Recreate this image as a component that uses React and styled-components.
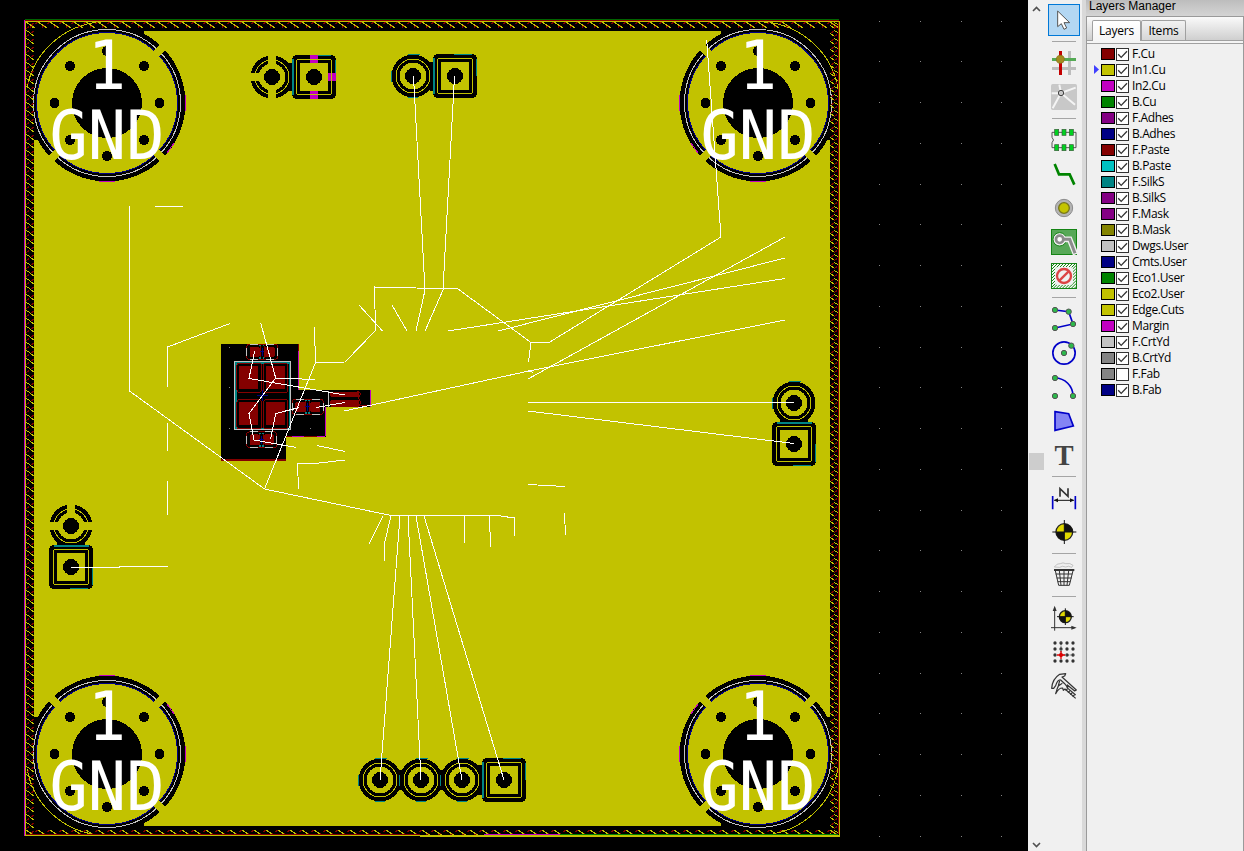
import React from 'react';
import styled, { createGlobalStyle } from 'styled-components';

const GlobalStyle = createGlobalStyle`
  html, body { margin: 0; padding: 0; overflow: hidden; background: #f0f0f0; }
  * { box-sizing: border-box; }
`;

const COPPER = '#c2c200';
const TEAL = '#008484';
const MAGENTA = '#c200c2';
const RED = '#840000';

const Frame = styled.div`
  display: flex;
  width: 1244px;
  height: 851px;
  background: #f0f0f0;
  overflow: hidden;
`;
const Canvas = styled.svg`
  flex: none;
  display: block;
  width: 1028px;
  height: 851px;
  background: #000;
`;
const Scrollbar = styled.div`
  flex: none;
  width: 17px;
  display: flex;
  flex-direction: column;
  align-items: center;
  justify-content: space-between;
  padding: 6px 1px 3px 0;
  background: #f0f0f0;
`;
const Chevron = styled.svg`
  width: 9px;
  height: 6px;
  display: block;
`;
const Thumb = styled.div`
  width: 15px;
  height: 17px;
  margin-top: 68px;
  background: #cdcdcd;
`;
const Toolbar = styled.div`
  flex: none;
  width: 37px;
  padding-top: 3px;
  display: flex;
  flex-direction: column;
  align-items: center;
`;
const ToolButton = styled.div`
  flex: none;
  width: 32px;
  height: 32px;
  margin: 1px 0;
  display: flex;
  align-items: center;
  justify-content: center;
  background: ${(p) => (p.$active ? '#b3d7f3' : 'transparent')};
  border: 1px solid ${(p) => (p.$active ? '#0078d7' : 'transparent')};
`;
const ToolIcon = styled.svg`
  flex: none;
  width: 30px;
  height: 30px;
  display: block;
`;
const ToolSeparator = styled.div`
  flex: none;
  width: 24px;
  height: 1px;
  margin: 4px 0;
  background: #a5a5a5;
`;
const Panel = styled.div`
  flex: 1;
  display: flex;
  flex-direction: column;
  font-family: 'Open Sans', 'Noto Sans', sans-serif;
  border-left: 4px solid #d9d9d9;
`;
const PanelTitle = styled.div`
  height: 16px;
  padding-left: 3px;
  font: 12px/13px 'Liberation Sans', Arial, sans-serif;
  color: #000;
  background: linear-gradient(#bdbdbd, #d4d4d4);
`;
const Notebook = styled.div`
  flex: 1;
  display: flex;
  flex-direction: column;
  border: 1px solid #9a9a9a;
  border-bottom: 0;
`;
const TabBar = styled.div`
  height: 24px;
  padding: 3px 0 0 5px;
  display: flex;
  background: linear-gradient(#fafafa, #cfcfcf);
  border-bottom: 1px solid #a0a0a0;
`;
const Tab = styled.div`
  height: ${(p) => (p.$active ? 21 : 20)}px;
  width: ${(p) => (p.$active ? 49 : 45)}px;
  padding-bottom: ${(p) => (p.$active ? 2 : 0)}px;
  display: flex;
  align-items: center;
  justify-content: center;
  font-size: 12px;
  letter-spacing: -0.2px;
  color: #000;
  border: 1px solid #a0a0a0;
  border-bottom: 0;
  border-radius: 2px 2px 0 0;
  background: ${(p) => (p.$active ? 'linear-gradient(#fff, #f4f4f4)' : 'linear-gradient(#f2f2f2, #d6d6d6)')};
`;
const TabEdge = styled.div`
  height: 3px;
  background: #f4f4f4;
  border-bottom: 1px solid #a0a0a0;
`;
const LayerList = styled.div`
  padding-top: 2px;
  display: flex;
  flex-direction: column;
`;
const LayerRow = styled.div`
  height: 16px;
  display: flex;
  align-items: center;
`;
const ActiveMark = styled.svg`
  width: 14px;
  height: 9px;
  margin-top: -2px;
  visibility: ${(p) => (p.$on ? 'visible' : 'hidden')};
`;
const Swatch = styled.div`
  width: 14px;
  height: 12px;
  margin-right: 1px;
  border: 1px solid #000;
  background: ${(p) => p.$color};
`;
const CheckBox = styled.svg`
  width: 13px;
  height: 13px;
  background: #fff;
  border: 1px solid #333;
`;
const LayerName = styled.span`
  margin-left: 3px;
  font-size: 12px;
  line-height: 16px;
  letter-spacing: -0.38px;
  color: #000;
`;

/* ---------- board drawing ---------- */

function MountingHole({ x, y, flipX = 1, flipY = 1 }) {
  const spokes = [[1, -1], [1, 1], [-1, 1]];
  const drills = [[-37, -37], [37, -37], [-52.5, 0], [52.5, 0], [-37, 37], [37, 37], [0, 53], [0, -52]];
  return (
    <g transform={`translate(${x} ${y})`}>
      <g transform={`scale(${flipX} ${flipY})`}>
        <path d="M-73 -72H37V-60L-60 37H-73Z" fill="#000" />
        <path d="M-80 -15A81 81 0 0 1 5 -81" fill="none" stroke={COPPER} />
        <circle r="78.5" fill="#000" />
        <path d="M78.5 -8V8M-8 78.5H8M67 40L60 50" fill="none" stroke={MAGENTA} />
        <circle r="70.5" fill={COPPER} stroke="#000084" />
        <circle r="73.5" fill="none" stroke="#c2c2c2" />
        {spokes.map(([sx, sy]) => (
          <line key={`${sx}${sy}`} x1={sx * 48} y1={sy * 48} x2={sx * 58} y2={sy * 58} stroke={COPPER} strokeWidth="8" />
        ))}
      </g>
      <circle r="35" fill="#000" />
      {drills.map(([dx, dy], i) => <circle key={i} cx={dx} cy={dy} r="5" fill="#000" />)}
    </g>
  );
}

function HoleLabel({ x, y }) {
  return (
    <g
      transform={`translate(${x} ${y}) scale(.95 1)`}
      fill="#fff"
      fontFamily="'DejaVu Sans Mono', monospace"
      fontSize="67"
      textAnchor="middle"
      shapeRendering="auto"
    >
      <text x="0" y="-14">1</text>
      <text x="0" y="56">GND</text>
    </g>
  );
}

function RoundPad({ x, y, gaps }) {
  return (
    <g transform={`translate(${x} ${y})`}>
      <circle r="21.5" fill="#000" />
      {!gaps && <path d="M-5 -21.5H7M-5 21.5H5M-21.5 -5V6" stroke={TEAL} fill="none" />}
      <circle r="17" fill="none" stroke={COPPER} />
      <circle r="13.5" fill={COPPER} />
      {(gaps || []).map(([gx, gy], i) => (
        <line key={i} x1={gx * 12} y1={gy * 12} x2={gx * 23} y2={gy * 23} stroke={COPPER} strokeWidth="8" />
      ))}
      <circle r="8" fill="#000" />
    </g>
  );
}

function SquarePad({ x, y, side = 'left', spokes }) {
  return (
    <g transform={`translate(${x} ${y})`}>
      <rect x="-22" y="-22" width="44" height="44" rx="5" fill="#000" />
      {side === 'left'
        ? <path d="M-21 -18V18M-1 -21.5H17M21.5 -17V0" stroke={TEAL} strokeWidth="1.6" fill="none" />
        : <path d="M-17 -21H18M21.5 0V18M-1 21.5H17" stroke={TEAL} strokeWidth="1.6" fill="none" />}
      {spokes && <path d="M0 -22V-13M0 22V13M13 0H22" stroke={MAGENTA} strokeWidth="8" />}
      <rect x="-17.5" y="-17.5" width="35" height="35" rx="2" fill="none" stroke={COPPER} />
      <rect x="-14" y="-14" width="28" height="28" fill={COPPER} />
      <circle r="8" fill="#000" />
    </g>
  );
}

const RATSNEST = [
  '129.5,206 129.5,391 264.5,489 391,515.5 497,515.5 514.5,518 514.5,536',
  '155,206.5 183,206.5', '230,323.5 167.5,347 167.5,387', '167.5,423 167.5,451', '167.5,481 167.5,515',
  '71,567.5 168,566.5',
  '260.7,323 275.7,378 315,379.5', '275.7,378 249,413.5 254,440 296.5,447.5',
  '254.5,351.5 249,378.5 345,395', '270.5,439.5 275.7,413.5 299.5,407.5', '316,407.5 345,402.5',
  '314.5,327 315.5,362.5 345,362 375.5,330.5 374.5,287 458,289 531,342.5 549,342.5 721,237 706.7,40',
  '315.5,362.5 264.5,489', '359,305 382.5,331', '392,305 407,331',
  '344,411 529,371 785,320', '317,445.5 345,451.5', '297.5,463.5 314.5,463.5 345,460', '297.5,463.5 298.5,489',
  '413.5,76 425,290 416,331', '454.5,76 443,290 425,331', '531,342.5 528.5,362',
  '785,237 528,379', '785,258 498,331', '785,278.5 448,331', '528,370.5 533,372.5',
  '528,402.5 794,402.5', '528,411 794,443.5', '528,484.5 565,486.5', '564.5,513 565.5,535',
  '383,516 369,544', '391,516 384.5,543 384.5,561', '400,516 380,780', '408,516 421,780', '416,516 462,780', '424,516 504,780',
  '464.5,516 464.5,543', '489.5,516 490.5,547',
];

/* Component area, in units of a third of a pixel. */
function ComponentArea() {
  const smallPads = [[109, 102, 95, 47], [109, 365, 93, 48], [246, 267, 95, 47]];
  return (
    <g transform="translate(210 310) scale(.33333)">
      <path d="M33 102H266V240H482V291H347V380H227V452H33Z" fill="#000" />
      <path d="M265 123V240M481 240V291M346 291V379H227" fill="none" stroke={MAGENTA} strokeWidth="3" />
      <path d="M265 102V123M33 450H227" fill="none" stroke={RED} strokeWidth="4" />
      <path d="M227 380H246M282 380H320M445 286H475" fill="none" stroke={RED} strokeWidth="3" />
      <rect x="77" y="158" width="162" height="198" fill="none" stroke={TEAL} strokeWidth="6" />
      {[[87, 168], [167, 168], [87, 277], [167, 277]].map(([x, y]) => (
        <g key={`${x}-${y}`}>
          <rect x={x - 6} y={y - 8} width="73" height="87" rx="6" fill="#000" stroke={RED} strokeWidth="3" />
          <rect x={x} y={y} width="58" height="69" fill={RED} />
        </g>
      ))}
      <rect x="73" y="154" width="169" height="204" fill="none" stroke="#c2c2c2" strokeWidth="3" />
      <path d="M142 257H174M158 240V273" stroke="#000084" strokeWidth="3" />
      {smallPads.map(([x, y, w, h], i) => (
        <g key={i}>
          <rect x={x + 1} y={y + 1} width={w - 2} height={h - 2} rx="7" fill="#000" stroke={RED} strokeWidth="3" />
          <path
            d={`M${x + 12} ${y + 1}h24M${x + w - 36} ${y + 1}h24M${x + 12} ${y + h - 1}h24M${x + w - 36} ${y + h - 1}h24M${x + 1} ${y + 12}v24M${x + w - 1} ${y + 12}v24`}
            fill="none"
            stroke="#c2c2c2"
            strokeWidth="3"
          />
          <rect x={x + 10} y={y + 8} width="30" height="32" rx="6" fill={RED} />
          <rect x={x + w - 40} y={y + 8} width="30" height="32" rx="6" fill={RED} />
          <path d={`M${x + w / 2 - 6} ${y + 6}V${y + h - 6}M${x + w / 2 + 6} ${y + 6}V${y + h - 6}`} stroke={RED} strokeWidth="3" />
          <path d={`M${x + w / 2 - 8} ${y + 5}h16M${x + w / 2 - 8} ${y + h - 5}h16`} stroke={TEAL} strokeWidth="4" strokeDasharray="5 5" />
          <path d={`M${x + w / 2 - 7} ${y + h / 2}h14M${x + w / 2} ${y + 12}v${h - 24}`} stroke="#000084" strokeWidth="3" />
        </g>
      ))}
      <path d="M357 242V290" stroke="#c2c2c2" strokeWidth="3" />
      <path d="M364 246H448V262H364L358 256ZM364 270H448V290H364L358 276Z" fill={RED} />
      <path d="M440 242L452 250L446 264L452 276L446 290" fill="none" stroke={RED} strokeWidth="3" />
    </g>
  );
}

function Board() {
  const dots = [];
  for (let k = 0; k <= 20; k++) for (let i = 0; i < 4; i++) dots.push([879 + Math.round(i * 40.8), Math.round(20.5 + k * 40.75)]);
  [[229, 347], [229, 387], [229, 428], [310, 428]].forEach((d) => dots.push(d));
  return (
    <Canvas viewBox="0 0 1028 851" shapeRendering="crispEdges">
      <defs>
        <pattern id="hatchV" x="26" y="22" width="8" height="8" patternUnits="userSpaceOnUse">
          <path d="M0 0L8 6" stroke={COPPER} /><path d="M8 1L0 7" stroke={RED} strokeDasharray="4 2" />
        </pattern>
        <pattern id="hatchH" x="26" y="22" width="12" height="8" patternUnits="userSpaceOnUse">
          <path d="M0 0L9 6" stroke={COPPER} /><path d="M12 0L3 6" stroke={RED} strokeDasharray="4 2" />
        </pattern>
      </defs>
      <rect x="34" y="31" width="796" height="795" fill={COPPER} />
      <MountingHole x={107} y={103} />
      <MountingHole x={758} y={103} flipX={-1} />
      <MountingHole x={107} y={754} flipY={-1} />
      <MountingHole x={758} y={754} flipX={-1} flipY={-1} />
      <rect x="26" y="22" width="8" height="812" fill="url(#hatchV)" />
      <rect x="830" y="22" width="8" height="812" fill="url(#hatchV)" />
      <rect x="26" y="22" width="812" height="7" fill="url(#hatchH)" />
      <rect x="26" y="828" width="812" height="7" fill="url(#hatchH)" />
      <path d="M25 19.5H839" stroke="#006400" />
      <path d="M25 20.5H839M838.5 21V834M26 834.5H420" stroke={RED} />
      <path d="M26 21.5H839.5V836.5H420M26 835.5H839M25.5 21V836" fill="none" stroke={COPPER} />
      <path d="M24.5 20V836M484 834.5H560" stroke={MAGENTA} />
      <path d="M560 834.5H838" stroke="#008400" />
      <path d="M289 63H294V91H289ZM430 62H435V91H430ZM780 418H808V424H780ZM57 542H85V547H57ZM396 770H405V790H396ZM437 770H446V790H437ZM478 765H486V795H478Z" fill="#000" />
      <RoundPad x={272} y={77} gaps={[[0, -1], [0, 1], [-1, 0]]} />
      <SquarePad x={314} y={77} spokes />
      <RoundPad x={413} y={76} />
      <SquarePad x={455} y={76} />
      <RoundPad x={794} y={403} />
      <SquarePad x={794} y={444} side="top" />
      <RoundPad x={71} y={526} gaps={[[0, -1], [1, 0], [-1, 0]]} />
      <SquarePad x={71} y={567} side="top" />
      <RoundPad x={380} y={780} />
      <RoundPad x={421} y={780} />
      <RoundPad x={462} y={780} />
      <SquarePad x={504} y={780} />
      <ComponentArea />
      {dots.map(([x, y], i) => <rect key={i} x={x} y={y} width="1" height="1" fill="#848484" />)}
      {RATSNEST.map((p, i) => <polyline key={i} points={p} fill="none" stroke="#fff" />)}
      <HoleLabel x={107} y={103} />
      <HoleLabel x={758} y={103} />
      <HoleLabel x={107} y={754} />
      <HoleLabel x={758} y={754} />
    </Canvas>
  );
}

/* ---------- toolbar icons, drawn on a 90 unit grid ---------- */

const Dot = ({ x, y }) => <circle cx={x} cy={y} r="8" fill="#2db84b" stroke="#555" strokeWidth="3" />;
const Target = ({ x, y, r, arm, mirror = 1 }) => (
  <g transform={`translate(${x} ${y}) scale(${mirror} 1)`}>
    <circle r={r} fill="#e0d800" stroke="#222" strokeWidth="4" />
    <path d={`M0 0V${-r}A${r} ${r} 0 0 1 ${r} 0ZM0 0V${r}A${r} ${r} 0 0 1 ${-r} 0Z`} fill="#111" />
    <path d={`M0 ${-arm}V${arm}M${-arm} 0H${arm}`} stroke="#111" strokeWidth="3" />
  </g>
);

const ICONS = {
  cursor: <path d="M26 18V65L37 56L45 73L53 69L45 53H62Z" fill="#fff" stroke="#555" strokeWidth="3" />,
  highlight: (
    <g>
      <path d="M61.5 9V81M9 61.5H81" stroke="#bdbdbd" strokeWidth="9" />
      <path d="M34.5 9V81" stroke="#c40000" strokeWidth="9" />
      <path d="M9 34.5H81" stroke="#55aa55" strokeWidth="9" />
      <circle cx="34" cy="34" r="12" fill="#a38c20" stroke="#83701c" strokeWidth="2" />
    </g>
  ),
  ratsnest: (
    <g>
      <rect x="6" y="6" width="78" height="78" rx="5" fill="#c8c8c8" />
      <path d="M36 33L11 79M36 33L80 17M36 33L78 68M36 33L8 34M36 33L31 8" stroke="#f4f4f4" strokeWidth="6" />
      <circle cx="36" cy="33" r="8" fill="#c8c8c8" stroke="#444" strokeWidth="3" />
    </g>
  ),
  footprint: (
    <g>
      <path d="M9 22H81V68H9V53Q18 45 9 37Z" fill="none" stroke="#555" strokeWidth="3" />
      {[17, 39, 61].map((x) => [13, 59].map((y) => (
        <rect key={`${x}${y}`} x={x} y={y} width="12" height="18" fill="#00d020" stroke="#3a5a3a" strokeWidth="2" />
      )))}
    </g>
  ),
  trace: <path d="M17 15L30 46H62L76 77" fill="none" stroke="#008400" strokeWidth="8" />,
  via: (
    <g>
      <circle cx="45" cy="45" r="26" fill="#b4b4b4" stroke="#8c8c8c" strokeWidth="3" />
      <circle cx="45" cy="45" r="16" fill="#c4c400" stroke="#77771a" strokeWidth="4" />
    </g>
  ),
  zone: (
    <g>
      <rect x="7.5" y="7.5" width="75" height="75" fill="#58a858" stroke="#148414" strokeWidth="3" />
      <circle cx="32" cy="37" r="20" fill="#f0f0f0" stroke="#148414" strokeWidth="3" />
      <path d="M40 37H62L80 82" fill="none" stroke="#f0f0f0" strokeWidth="17" />
      <path d="M40 37H62L78 79" fill="none" stroke="#8c8c8c" strokeWidth="9" />
      <circle cx="32" cy="37" r="11" fill="#fff" stroke="#8c8c8c" strokeWidth="8" />
    </g>
  ),
  keepout: (
    <g>
      <rect x="7.5" y="7.5" width="75" height="75" fill="#f4faf4" />
      <path
        d="M8 16L16 8M8 25L25 8M8 34L34 8M8 43L43 8M8 52L52 8M8 61L61 8M8 70L70 8M8 79L79 8M13 82L82 13M22 82L82 22M31 82L82 31M40 82L82 40M49 82L82 49M58 82L82 58M67 82L82 67M76 82L82 76"
        stroke="#148414"
        strokeWidth="3"
      />
      <rect x="7.5" y="7.5" width="75" height="75" fill="none" stroke="#148414" strokeWidth="3" />
      <rect x="18" y="18" width="54" height="54" rx="8" fill="#f0f0f0" />
      <circle cx="45" cy="45" r="21" fill="#f0f0f0" stroke="#dc4444" strokeWidth="7" />
      <path d="M31 59L59 31" stroke="#dc4444" strokeWidth="7" />
    </g>
  ),
  polyline: (
    <g>
      <path d="M18 18L59 23L72 60L18 72" fill="none" stroke="#0000c8" strokeWidth="5" />
      <Dot x={18} y={18} /><Dot x={59} y={23} /><Dot x={72} y={60} /><Dot x={18} y={72} />
    </g>
  ),
  circle: (
    <g>
      <circle cx="45" cy="45" r="33.5" fill="none" stroke="#0000c8" strokeWidth="5" />
      <Dot x={45} y={45} /><Dot x={67} y={23} />
    </g>
  ),
  arc: (
    <g>
      <path d="M18 18A54 54 0 0 1 72 72" fill="none" stroke="#0000c8" strokeWidth="5" />
      <Dot x={18} y={18} /><Dot x={72} y={72} /><Dot x={18} y={72} />
    </g>
  ),
  polygon: <path d="M18 17L59 23L73 60L18 73Z" fill="#8484f4" stroke="#0000c8" strokeWidth="5" />,
  text: <text x="45" y="75" textAnchor="middle" fontFamily="'Liberation Serif', serif" fontWeight="bold" fontSize="86" fill="#444">T</text>,
  dimension: (
    <g>
      <path d="M33 41V17L57 40V16" fill="none" stroke="#333" strokeWidth="5" />
      <path d="M11 39V79M79 39V79" stroke="#0000c8" strokeWidth="5" />
      <path d="M16 52H74" stroke="#111" strokeWidth="3" />
      <path d="M14 52L27 46V58ZM76 52L63 46V58Z" fill="#111" />
    </g>
  ),
  target: <Target x={46} y={45} r={25} arm={36} />,
  trash: (
    <g fill="none" stroke="#333">
      <path d="M16 21Q24 9 34 11Q42 6 50 11Q64 8 72 16L68 22Q58 16 50 21Q40 16 32 22Z" stroke="#aaa" strokeWidth="2" />
      <path d="M15 30H76" strokeWidth="6" />
      <path d="M19 32L29 76H61L72 32M31 32L36 76M45 32V76M59 32L54 76" strokeWidth="3" />
      <path d="M20 42H70M23 54H68M26 65H64" strokeWidth="3" />
    </g>
  ),
  origin: (
    <g>
      <path d="M17 83V14M6 74H76" stroke="#333" strokeWidth="3" />
      <path d="M17 8L23 24H11ZM83 74L67 68V80Z" fill="#333" />
      <Target x={49} y={41} r={18} arm={25} />
    </g>
  ),
  grid: (
    <g>
      {[18, 36, 54, 72].map((x) => [18, 36, 54, 72].map((y) => <circle key={`${x}${y}`} cx={x} cy={y} r="5" fill="#333" />))}
      <path d="M36 14V54M36 54H76" stroke="#555" strokeWidth="3" strokeDasharray="4 3" />
      <path d="M36 42V66M24 54H48" stroke="#e00000" strokeWidth="4" />
      <circle cx="36" cy="54" r="6" fill="#e00000" />
    </g>
  ),
  caliper: (
    <g fill="none" stroke="#333" strokeWidth="3.6" strokeLinejoin="round">
      <path d="M8 52Q10 24 32 10L50 8L47 15L39 18L82 57L77 60L55 42L56 50L48 39L35 27Q26 25 20 44L14 52Z" />
      <path d="M32 29L28 45L24 55L20 68Q30 50 41 51L43 58L48 54L80 82M28 45L40 37M53 49L80 72" />
      <path d="M50 59L56 53M57 65L63 59M64 71L70 65M71 77L77 71" />
    </g>
  ),
};

const TOOLS = ['cursor', '-', 'highlight', 'ratsnest', '-', 'footprint', 'trace', 'via', 'zone', 'keepout', '-',
  'polyline', 'circle', 'arc', 'polygon', 'text', '-', 'dimension', 'target', '-', 'trash', '-', 'origin', 'grid', 'caliper'];

const LAYERS = [
  ['F.Cu', '#840000'], ['In1.Cu', '#c2c200'], ['In2.Cu', '#c200c2'], ['B.Cu', '#008400'],
  ['F.Adhes', '#840084'], ['B.Adhes', '#000084'], ['F.Paste', '#840000'], ['B.Paste', '#00c2c2'],
  ['F.SilkS', '#008484'], ['B.SilkS', '#840084'], ['F.Mask', '#840084'], ['B.Mask', '#848400'],
  ['Dwgs.User', '#c2c2c2'], ['Cmts.User', '#000084'], ['Eco1.User', '#008400'], ['Eco2.User', '#c2c200'],
  ['Edge.Cuts', '#c2c200'], ['Margin', '#c200c2'], ['F.CrtYd', '#c2c2c2'], ['B.CrtYd', '#848484'],
  ['F.Fab', '#848484'], ['B.Fab', '#000084'],
];

export default function App() {
  return (
    <Frame>
      <GlobalStyle />
      <Board />
      <Scrollbar>
        <Chevron viewBox="0 0 9 6"><path d="M1 5L4.5 1.5L8 5" fill="none" stroke="#505050" strokeWidth="1.6" /></Chevron>
        <Thumb />
        <Chevron viewBox="0 0 9 6"><path d="M1 1L4.5 4.5L8 1" fill="none" stroke="#505050" strokeWidth="1.6" /></Chevron>
      </Scrollbar>
      <Toolbar>
        {TOOLS.map((name, i) => (name === '-' ? <ToolSeparator key={i} /> : (
          <ToolButton key={i} $active={name === 'cursor'}>
            <ToolIcon viewBox="0 0 90 90">{ICONS[name]}</ToolIcon>
          </ToolButton>
        )))}
      </Toolbar>
      <Panel>
        <PanelTitle>Layers Manager</PanelTitle>
        <Notebook>
          <TabBar>
            <Tab $active>Layers</Tab>
            <Tab>Items</Tab>
          </TabBar>
          <TabEdge />
          <LayerList>
            {LAYERS.map(([name, color]) => (
              <LayerRow key={name}>
                <ActiveMark $on={name === 'In1.Cu'} viewBox="0 0 14 9"><path d="M7 0V9L12 4.5Z" fill="#4040ff" /></ActiveMark>
                <Swatch $color={color} />
                <CheckBox viewBox="0 0 11 11">
                  {name !== 'F.Fab' && <path d="M1.2 5.2L4.2 8.4L10 2.2" fill="none" stroke="#333" strokeWidth="1.3" />}
                </CheckBox>
                <LayerName>{name}</LayerName>
              </LayerRow>
            ))}
          </LayerList>
        </Notebook>
      </Panel>
    </Frame>
  );
}
